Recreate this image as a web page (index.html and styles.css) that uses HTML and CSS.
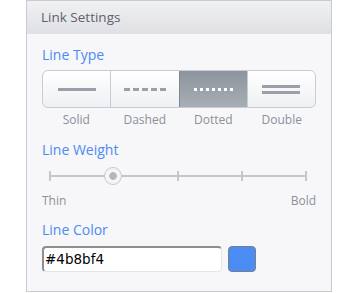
FILE: index.html
```html
<!DOCTYPE html>
<html>
<head>
<meta charset="utf-8">
<link rel="stylesheet" href="styles.css">
</head>
<body>
<div class="panel">
  <div class="header">Link Settings</div>
  <div class="body">
    <div class="label lt">Line Type</div>
    <div class="seg">
      <div class="opt"><svg width="40" height="4"><rect x="1" y="1" width="38" height="3" fill="#9aa0a8"/></svg></div>
      <div class="opt"><svg width="44" height="4"><g fill="#9aa0a8"><rect x="1" y="1" width="6" height="3"/><rect x="10" y="1" width="6" height="3"/><rect x="19" y="1" width="6" height="3"/><rect x="28" y="1" width="6" height="3"/><rect x="37" y="1" width="6" height="3"/></g></svg></div>
      <div class="opt sel"><svg width="40" height="4"><g fill="#ffffff"><rect x="1" y="1" width="3" height="3"/><rect x="7" y="1" width="3" height="3"/><rect x="13" y="1" width="3" height="3"/><rect x="19" y="1" width="3" height="3"/><rect x="25" y="1" width="3" height="3"/><rect x="31" y="1" width="3" height="3"/><rect x="37" y="1" width="3" height="3"/></g></svg></div>
      <div class="opt"><svg width="40" height="10"><g fill="#9aa0a8"><rect x="1" y="1" width="38" height="3"/><rect x="1" y="7" width="38" height="3"/></g></svg></div>
    </div>
    <div class="seglabels"><span>Solid</span><span>Dashed</span><span>Dotted</span><span>Double</span></div>
    <div class="label lw">Line Weight</div>
    <div class="slider">
      <div class="track"></div>
      <div class="tick" style="left:7px"></div>
      <div class="tick" style="left:70px"></div>
      <div class="tick" style="left:135px"></div>
      <div class="tick" style="left:199px"></div>
      <div class="tick" style="left:263px"></div>
      <div class="thumb"></div>
    </div>
    <div class="ends"><span>Thin</span><span>Bold</span></div>
    <div class="label lc">Line Color</div>
    <div class="colorrow">
      <div class="input">#4b8bf4</div>
      <div class="swatch"></div>
    </div>
  </div>
</div>
</body>
</html>
```
FILE: styles.css
```css
html, body { margin: 0; padding: 0; background: #ffffff; }
body { font-family: "Open Sans", "Lato", sans-serif; }
.panel {
  margin-left: 26px;
  width: 304px;
  height: 290px;
  border: 1px solid #c6ccd5;
  background: #f7f7f9;
}
.header {
  height: 33px;
  line-height: 33px;
  padding-left: 14px;
  font-size: 13.5px;
  color: #5d6169;
  background: linear-gradient(#f1f1f3, #dfe0e4);
}
.body { padding: 0 14px 0 15px; }
.label { font-size: 14px; color: #4b8bf4; line-height: 16px; height: 16px; }
.lt { margin-top: 13px; }
.seg {
  margin-top: 7px;
  width: 272px;
  height: 36px;
  border: 1px solid #c6ccd5;
  border-radius: 6px;
  display: flex;
  overflow: hidden;
  background: linear-gradient(#ffffff, #eff0f3);
}
.opt {
  flex: 1;
  display: flex;
  align-items: center;
  justify-content: center;
  border-left: 1px solid #c6ccd5;
}
.opt:first-child { border-left: none; }
.opt svg { display: block; }
.sel { background: linear-gradient(#8c949d, #a8aeb5); border-left-color: #7f8790; }
.seglabels {
  display: flex;
  width: 274px;
  margin-top: 5px;
  height: 14px;
  line-height: 14px;
  font-size: 12px;
  color: #8b9099;
}
.seglabels span { flex: 1; text-align: center; }
.lw { margin-top: 15px; }
.slider { position: relative; margin-top: 8px; width: 274px; height: 20px; }
.track { position: absolute; left: 8px; right: 9px; top: 9px; height: 2px; background: #c3c7cd; }
.tick { position: absolute; top: 5px; width: 2px; height: 10px; background: #c3c7cd; }
.thumb {
  position: absolute;
  left: 62px; top: 1px;
  width: 16px; height: 16px;
  border: 1px solid #c3c7cd;
  border-radius: 50%;
  background: radial-gradient(circle, #b4b8be 0 3.5px, #f4f5f7 4px);
}
.ends {
  display: flex;
  justify-content: space-between;
  width: 274px;
  margin-top: 8px;
  height: 14px;
  line-height: 14px;
  font-size: 12px;
  color: #8b9099;
}
.lc { margin-top: 14px; }
.colorrow { display: flex; margin-top: 8px; gap: 6px; }
.input {
  box-sizing: border-box;
  width: 180px; height: 26px;
  border: 1px solid #8e8e8e;
  border-top-width: 2px; border-left-width: 2px;
  border-right-color: #e6e6e6; border-bottom-color: #e6e6e6;
  border-radius: 4px;
  background: #ffffff;
  font-family: "DejaVu Sans", sans-serif;
  font-size: 13.5px;
  line-height: 22px;
  padding-left: 1px;
  color: #000;
}
.swatch {
  width: 26px; height: 24px;
  border: 1px solid #7b7f87;
  border-radius: 4px;
  background: #4b8bf4;
}
```
